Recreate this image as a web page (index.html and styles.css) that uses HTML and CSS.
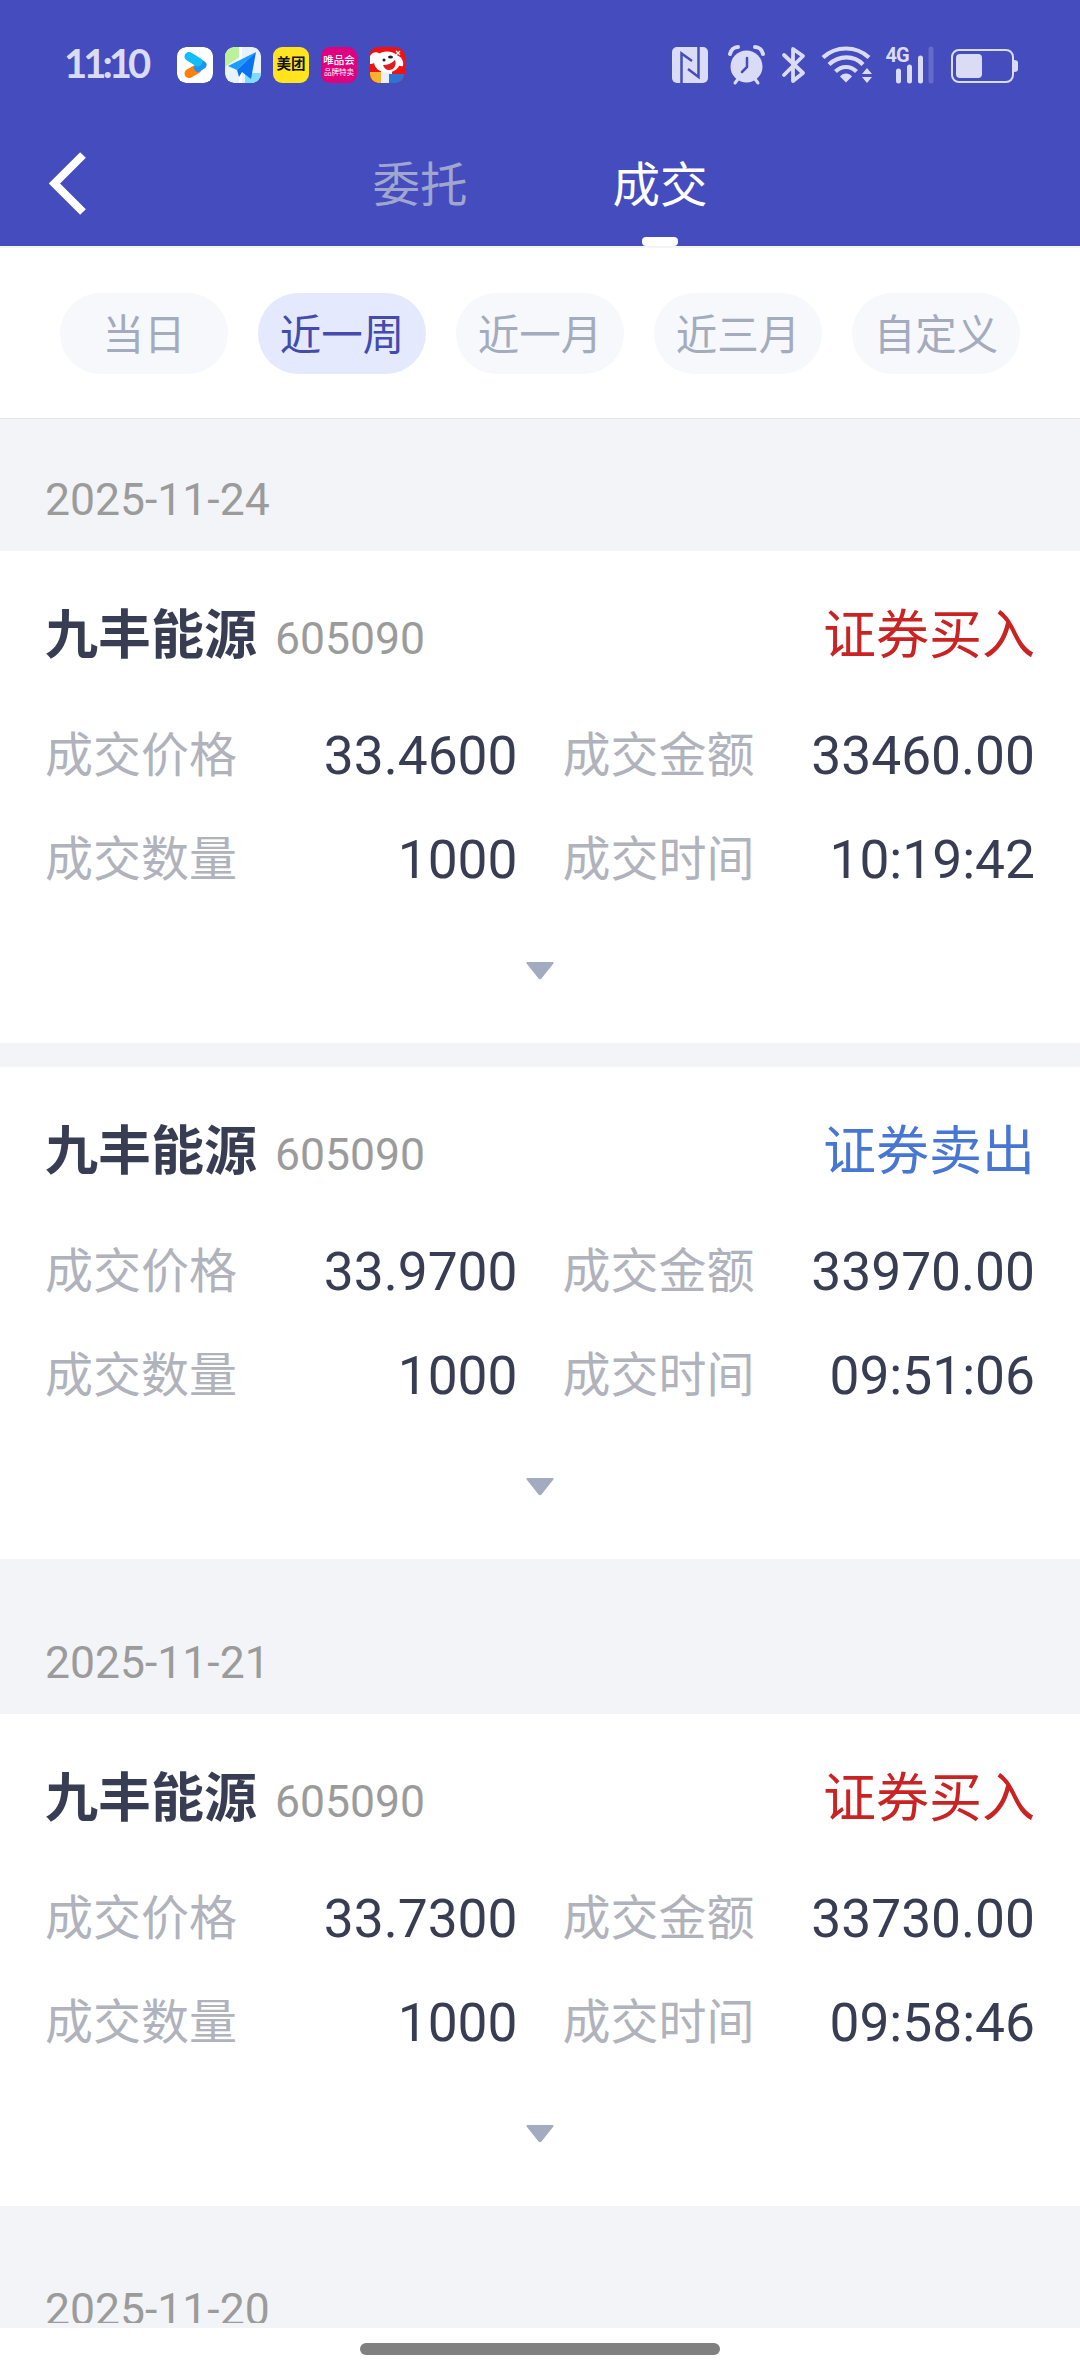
FILE: index.html
```html
<!DOCTYPE html>
<html lang="zh-CN">
<head>
    <meta charset="UTF-8">
    <meta name="viewport" content="width=device-width, initial-scale=1.0">
    <title>成交</title>
    <link rel="stylesheet" href="styles.css">
</head>
<body>

    <div class="header">
        <div class="status-bar">
            <span class="clock">11:10</span>
            <div class="apps">
                <svg class="app" viewBox="0 0 36 36">
                    <rect width="36" height="36" rx="9" fill="#fff"/>
                    <path d="M12 26.500L20 22" stroke="#ff7f0a" stroke-width="9" stroke-linecap="round"/>
                    <path d="M12 9.500L25.500 18L21 21" stroke="#1c94f5" stroke-width="8" stroke-linecap="round" stroke-linejoin="round" fill="none"/>
                    <path d="M12 9.500L21 15" stroke="#12bdfb" stroke-width="9" stroke-linecap="round"/>
                </svg>
                <svg class="app" viewBox="0 0 36 36">
                    <rect width="36" height="36" rx="9" fill="#e9f3fc"/>
                    <path d="M9 0h5v10L0 20V9a9 9 0 0 1 9-9z" fill="#b9f29a"/>
                    <path d="M20 26h16v1a9 9 0 0 1-9 9h-7z" fill="#7fdcff"/>
                    <path d="M15.500 0v36" stroke="#fff" stroke-width="3"/>
                    <path d="M31 5L3 19l9 4z" fill="#1e9bff"/>
                    <path d="M31 5L12 23l2 7 3-5 9 7z" fill="#0a72ee"/>
                </svg>
                <div class="app meituan">美团</div>
                <div class="app vip"><b>唯品会</b><span>品牌特卖</span></div>
                <svg class="app" viewBox="0 0 36 36">
                    <rect width="36" height="36" rx="9" fill="#ee1212"/>
                    <path d="M1 25h11v11H9a9 9 0 0 1-8-9z" fill="#f9b32c"/>
                    <path d="M12 22h11v14H12z" fill="#e8eefa"/>
                    <ellipse cx="18" cy="15" rx="13" ry="10.500" fill="#fff"/>
                    <path d="M1 9c2-4 7-5 10-2l-3 6c-2 3-4 4-7 4z" fill="#fff"/>
                    <path d="M26 8c6 1 9 5 8 11-4 1-6-2-8-6z" fill="#fff"/>
                    <path d="M14 18c5 0 9-2 12-5 2 5-1 10-6 10-3 0-5-2-6-5z" fill="#e11b22"/>
                    <circle cx="15" cy="13" r="1.500" fill="#222"/>
                    <ellipse cx="21.500" cy="10" rx="2.500" ry="1.500" fill="#222"/>
                    <path d="M27 4l4 4M31 4l-4 4" stroke="#fff" stroke-width="1.300"/>
                    <path d="M20 27h15.500c-.5 5-4 9-8.500 9h-7z" fill="#2d73d2"/>
                </svg>
            </div>
            <svg class="status-icons" viewBox="0 0 350 44">
                <!-- nfc -->
                <rect x="0" y="4" width="36" height="36" rx="5" fill="#dadcf5"/>
                <path d="M9.500 40V10.500L20 18M26.500 4V34L16 26" stroke="#444cbe" stroke-width="2.500" fill="none"/>
                <!-- alarm -->
                <circle cx="74.500" cy="23.500" r="16" fill="#dadcf5"/>
                <path d="M58 11c1-4 4-7 8-7M91 11c-1-4-4-7-8-7" stroke="#dadcf5" stroke-width="4" stroke-linecap="round" fill="none"/>
                <path d="M66 36l-3 4M83 36l3 4" stroke="#dadcf5" stroke-width="3" stroke-linecap="round"/>
                <path d="M75 15v9l-5 5" stroke="#444cbe" stroke-width="2.500" stroke-linecap="round" fill="none"/>
                <!-- bluetooth -->
                <path d="M112 12L131 30L121 38V6L131 13L112 32" stroke="#dadcf5" stroke-width="3.800" stroke-linejoin="round" stroke-linecap="round" fill="none"/>
                <!-- wifi -->
                <path d="M151 14.500c13-12 33-12 46 0M157 21.500c10-9.500 25-9.500 34 0M163.500 28.500c6-6 15-6 21 0" stroke="#dadcf5" stroke-width="4.200" fill="none"/>
                <path d="M168 33.500c3-4 9-4 12 0l-6 6z" fill="#dadcf5"/>
                <path d="M190 31h10l-5-6zM190 34h10l-5 6z" fill="#dadcf5"/>
                <!-- signal -->
                <text x="213.500" y="19" class="net">4G</text>
                <path d="M226.500 28v10M237.500 24v14M248.500 15v23" stroke="#dadcf5" stroke-width="5" stroke-linecap="round"/>
                <path d="M259 6v32" stroke="#656bcb" stroke-width="5" stroke-linecap="round"/>
                <!-- battery -->
                <rect x="280" y="7" width="61" height="32" rx="7" fill="none" stroke="#dadcf5" stroke-width="2"/>
                <rect x="284" y="11" width="26" height="24" rx="4" fill="#dadcf5"/>
                <path d="M342 17c3 0 4 1 4 3v6c0 2-1 3-4 3z" fill="#dadcf5"/>
            </svg>
        </div>
        <div class="nav">
            <svg class="back" viewBox="0 0 40 66"><path d="M34 5L5.500 33.500L34 62" fill="none" stroke="#fff" stroke-width="8"/></svg>
            <div class="tabs">
                <div class="tab">委托</div>
                <div class="tab active">成交</div>
            </div>
        </div>
    </div>

    <div class="filters">
        <div class="chip">当日</div>
        <div class="chip selected">近一周</div>
        <div class="chip">近一月</div>
        <div class="chip">近三月</div>
        <div class="chip">自定义</div>
    </div>

    <div class="list" id="list"></div>

    <div class="home"><div class="home-bar"></div></div>

    <script>
        const days = [
            { date: "2025-11-24", deals: [
                { side: "buy", price: "33.4600", total: "33460.00", count: 1000, time: "10:19:42" },
                { side: "sell", price: "33.9700", total: "33970.00", count: 1000, time: "09:51:06" }
            ] },
            { date: "2025-11-21", deals: [
                { side: "buy", price: "33.7300", total: "33730.00", count: 1000, time: "09:58:46" }
            ] },
            { date: "2025-11-20", deals: [] }
        ];

        function renderDeal(deal) {
            return `
                <div class="card">
                    <div class="card-head">
                        <span class="name">九丰能源</span>
                        <span class="code">605090</span>
                        <span class="side ${deal.side}">${deal.side === "buy" ? "证券买入" : "证券卖出"}</span>
                    </div>
                    <div class="fields">
                        <div class="field"><label>成交价格</label><span>${deal.price}</span></div>
                        <div class="field"><label>成交金额</label><span>${deal.total}</span></div>
                        <div class="field"><label>成交数量</label><span>${deal.count}</span></div>
                        <div class="field"><label>成交时间</label><span>${deal.time}</span></div>
                    </div>
                    <svg class="more" viewBox="0 0 28 18"><path d="M1.500 0h25q2 0 .5 2L15.500 16.500q-1.500 1.500-3 0L1 2Q-.5 0 1.500 0z" fill="#a3abc0"/></svg>
                </div>
            `;
        }

        document.getElementById("list").innerHTML = days.map(day => `
            <div class="date">${day.date}</div>
            ${day.deals.map(renderDeal).join("")}
        `).join("");
    </script>

</body>
</html>
```
FILE: styles.css
```css
* {
    box-sizing: border-box;
}
body {
    margin: 0;
    height: 2376px;
    display: flex;
    flex-direction: column;
    overflow: hidden;
    font-family: Roboto, "Noto Sans CJK SC", sans-serif;
    background: white;
}
.header {
    height: 246px;
    flex: none;
    background: #444cbe;
    color: white;
}
.status-bar {
    height: 126px;
    display: flex;
    align-items: center;
    padding: 3px 58px 0 64px;
}
.clock {
    width: 113px;
    margin-top: -3px;
    font-family: Lato, sans-serif;
    font-size: 40px;
    font-weight: bold;
    letter-spacing: -4px;
    color: #dadcf5;
}
.apps {
    display: flex;
    gap: 12px;
}
.app {
    width: 36px;
    height: 36px;
    border-radius: 9px;
    overflow: hidden;
}
.meituan {
    background: #ffe41e;
    color: #111;
    font-size: 14.5px;
    font-weight: bold;
    line-height: 35px;
    text-align: center;
}
.vip {
    display: flex;
    flex-direction: column;
    align-items: center;
    padding-top: 7px;
    background: #e0007f;
    white-space: nowrap;
}
.vip b {
    font-size: 10.5px;
    line-height: 14px;
    font-weight: 500;
}
.vip span {
    margin-top: 1px;
    font-size: 7.5px;
    line-height: 7px;
}
.status-icons {
    width: 350px;
    height: 44px;
    margin-left: auto;
}
.net {
    font-family: Roboto, sans-serif;
    font-size: 20px;
    font-weight: bold;
    letter-spacing: -1px;
    fill: #dadcf5;
}
.nav {
    height: 120px;
    display: flex;
}
.back {
    width: 40px;
    height: 66px;
    margin: 24px 211px 0 49px;
}
.tabs {
    display: flex;
}
.tab {
    width: 240px;
    line-height: 120px;
    font-size: 47.5px;
    text-align: center;
    color: #a0a6cd;
}
.tab.active {
    display: flex;
    flex-direction: column;
    align-items: center;
    height: 120px;
    color: white;
}
.tab.active::after {
    content: "";
    width: 36px;
    height: 9px;
    margin-top: -9px;
    border-radius: 4px;
    background: white;
}
.filters {
    height: 173px;
    flex: none;
    display: flex;
    gap: 30px;
    padding: 45px 60px 0;
    border-top: 2px solid #f3f4f7;
    border-bottom: 1px solid #e5e5e5;
}
.chip {
    width: 168px;
    height: 81px;
    border-radius: 41px;
    background: #f6f8fc;
    color: #a3abbc;
    font-size: 41.5px;
    line-height: 86px;
    text-align: center;
}
.chip.selected {
    background: #e4e9fe;
    color: #434bad;
}
.list {
    flex: 1;
    min-height: 0;
    overflow: hidden;
    background: #f3f4f7;
    border-bottom: 5px solid #f3f4f7;
}
.date {
    height: 132px;
    padding: 30px 45px 0;
    font-size: 44.5px;
    line-height: 102px;
    color: #9b9b9b;
}
.card + .date {
    height: 155px;
    padding-top: 53px;
}
.card {
    height: 492px;
    padding: 45px 45px 0;
    background: white;
}
.card + .card {
    margin-top: 24px;
}
.card-head {
    display: flex;
    align-items: baseline;
    line-height: 80px;
}
.name {
    font-size: 53px;
    font-weight: bold;
    color: #383d54;
}
.code {
    margin-left: 18px;
    font-size: 44.5px;
    color: #9b9b9b;
}
.side {
    margin-left: auto;
    font-size: 53px;
}
.buy {
    color: #c92423;
}
.sell {
    color: #4876d3;
}
.fields {
    display: grid;
    grid-template-columns: 1fr 1fr;
    column-gap: 45px;
    margin-top: 25px;
}
.field {
    display: flex;
    align-items: center;
    justify-content: space-between;
    height: 104px;
    line-height: 104px;
}
.field label {
    font-size: 48px;
    color: #b0b2bc;
}
.field span {
    font-size: 53.3px;
    color: #383d54;
}
.more {
    display: block;
    width: 28px;
    height: 18px;
    margin: 50px auto 0;
}
.home {
    height: 48px;
    flex: none;
    padding-top: 15px;
}
.home-bar {
    width: 360px;
    height: 12px;
    margin: auto;
    border-radius: 6px;
    background: #808080;
}
```
